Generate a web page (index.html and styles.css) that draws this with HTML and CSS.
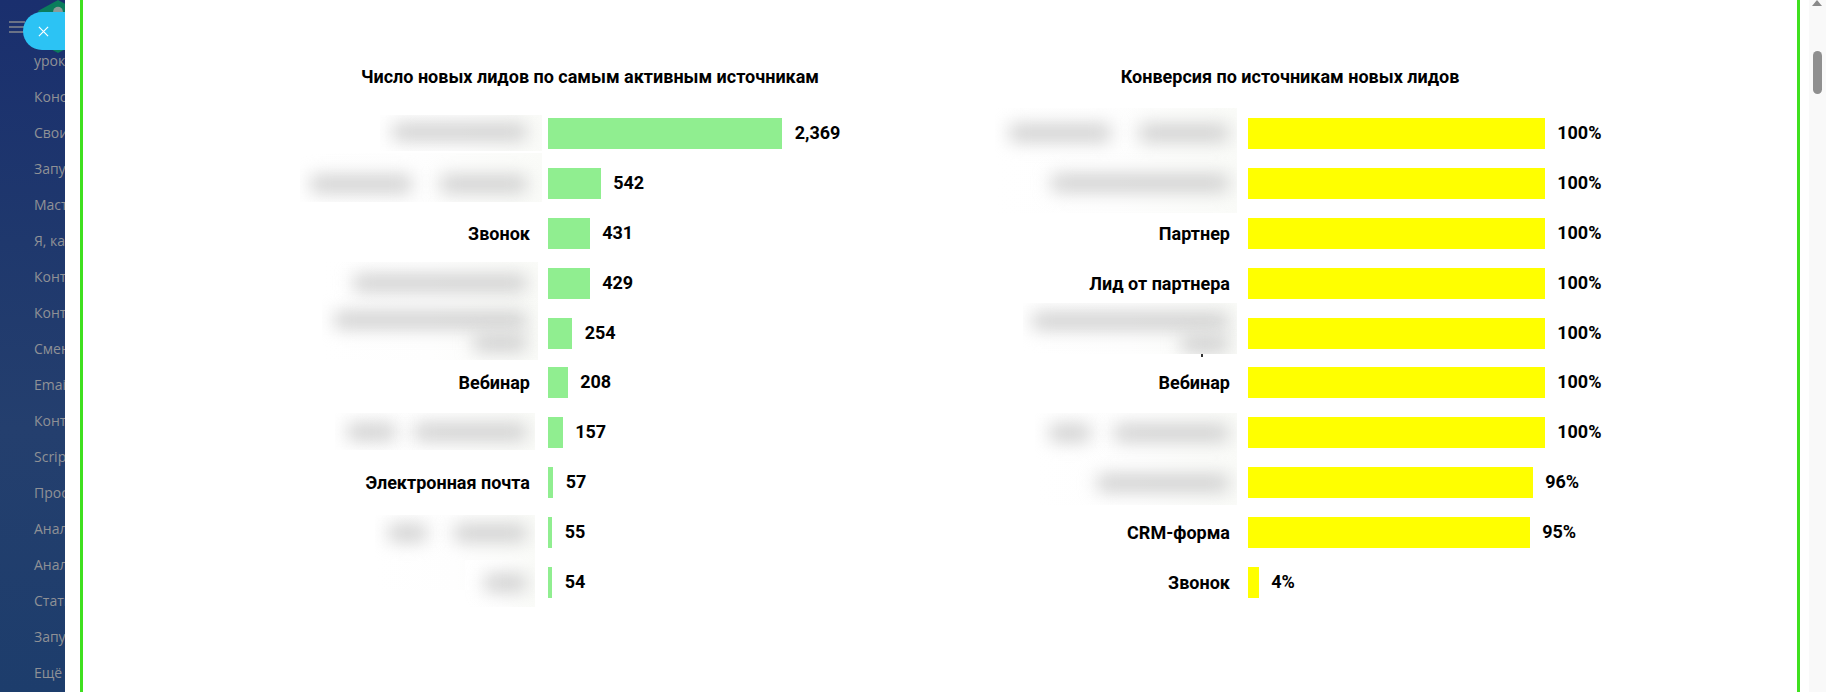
FILE: index.html
```html
<!DOCTYPE html>
<html lang="ru">
<head>
<meta charset="utf-8">
<title>Источники лидов</title>
<link rel="stylesheet" href="styles.css">
</head>
<body>
<div class="app">
  <aside class="sidebar">
    <svg class="logo" viewBox="0 0 40 54" aria-hidden="true"><path d="M20 0 40 11V43L20 54 0 43V11Z" fill="#0a7d5c"/><circle cx="20" cy="12" r="5" fill="#8b9a96"/></svg>
    <svg class="burger" viewBox="0 0 16 12" aria-hidden="true"><path d="M0 1h16M0 6h16M0 11h16" stroke="#85888f" stroke-width="1.4" fill="none"/></svg>
    <nav class="menu">
      <a>уроки</a><a>Консультации</a><a>Свои</a><a>Запуск</a><a>Мастер</a><a>Я, как</a><a>Контакты</a><a>Контент</a><a>Смена</a><a>Email</a><a>Контроль</a><a>Script</a><a>Просмотр</a><a>Анализ</a><a>Аналитика</a><a>Статистика</a><a>Запуски</a><a>Ещё</a>
    </nav>
    <button class="close" aria-label="Закрыть"><svg viewBox="0 0 12 12"><path d="M1 1 11 11M11 1 1 11" stroke="#fff" stroke-width="1.3" fill="none"/></svg></button>
  </aside>
  <main class="panel">
    <div class="frame">
      <div class="charts">
        <section class="chart chart-leads">
          <h2 class="title">Число новых лидов по самым активным источникам</h2>
          <div class="rows">
            <div class="row"><div class="label"><div class="redact l1"><div class="line"><i class="w133"></i></div></div></div><div class="bar" style="width:234.5px"></div><span class="value">2,369</span></div>
            <div class="row"><div class="label"><div class="redact l2"><div class="line"><i class="w100"></i><i class="w85 gap30"></i></div></div></div><div class="bar" style="width:53px"></div><span class="value">542</span></div>
            <div class="row"><div class="label">Звонок</div><div class="bar" style="width:42px"></div><span class="value">431</span></div>
            <div class="row"><div class="label"><div class="redact l4"><div class="line"><i class="w172"></i></div><div class="line next21"><i class="w191"></i></div><div class="line next7"><i class="w52"></i></div></div></div><div class="bar" style="width:42px"></div><span class="value">429</span></div>
            <div class="row"><div class="label"></div><div class="bar" style="width:24.5px"></div><span class="value">254</span></div>
            <div class="row"><div class="label">Вебинар</div><div class="bar" style="width:20px"></div><span class="value">208</span></div>
            <div class="row"><div class="label"><div class="redact l7"><div class="line"><i class="w47"></i><i class="w111 gap20"></i></div></div></div><div class="bar" style="width:15px"></div><span class="value">157</span></div>
            <div class="row"><div class="label">Электронная почта</div><div class="bar" style="width:5.5px"></div><span class="value">57</span></div>
            <div class="row"><div class="label"><div class="redact l9"><div class="line"><i class="w37"></i><i class="w71 gap29"></i></div></div></div><div class="bar" style="width:4.5px"></div><span class="value">55</span></div>
            <div class="row"><div class="label"><div class="redact l10"><div class="line"><i class="w41"></i></div></div></div><div class="bar" style="width:4.5px"></div><span class="value">54</span></div>
          </div>
        </section>
        <section class="chart chart-conv">
          <h2 class="title">Конверсия по источникам новых лидов</h2>
          <div class="rows">
            <div class="row"><div class="label"><div class="redact r1"><div class="line"><i class="w100"></i><i class="w88 gap30"></i></div><div class="line next34"><i class="w176"></i></div></div></div><div class="bar" style="width:297px"></div><span class="value">100%</span></div>
            <div class="row"><div class="label"></div><div class="bar" style="width:297px"></div><span class="value">100%</span></div>
            <div class="row"><div class="label">Партнер</div><div class="bar" style="width:297px"></div><span class="value">100%</span></div>
            <div class="row"><div class="label">Лид от партнера</div><div class="bar" style="width:297px"></div><span class="value">100%</span></div>
            <div class="row"><div class="label"><div class="redact r5"><div class="line"><i class="w195"></i></div><div class="line next7"><i class="w46"></i></div></div><span class="tick"></span></div><div class="bar" style="width:297px"></div><span class="value">100%</span></div>
            <div class="row"><div class="label">Вебинар</div><div class="bar" style="width:297px"></div><span class="value">100%</span></div>
            <div class="row"><div class="label"><div class="redact r7"><div class="line"><i class="w40"></i><i class="w113 gap25"></i></div><div class="line next34"><i class="w130"></i></div></div></div><div class="bar" style="width:297px"></div><span class="value">100%</span></div>
            <div class="row"><div class="label"></div><div class="bar" style="width:285px"></div><span class="value">96%</span></div>
            <div class="row"><div class="label">CRM-форма</div><div class="bar" style="width:282px"></div><span class="value">95%</span></div>
            <div class="row"><div class="label">Звонок</div><div class="bar" style="width:11px"></div><span class="value">4%</span></div>
          </div>
        </section>
      </div>
    </div>
  </main>
  <div class="scrollbar">
    <span class="arrow"></span>
    <span class="thumb"></span>
  </div>
</div>
</body>
</html>
```
FILE: styles.css
```css
* { box-sizing: border-box; }
html, body { margin: 0; height: 100%; overflow: hidden; background: #fff; }

.app { display: flex; width: 1826px; height: 692px; }

.sidebar {
  position: relative;
  flex: 0 0 65px;
  overflow: hidden;
  background: linear-gradient(to bottom, #1a2f6e 0%, #1f386d 35%, #243f6e 62%, #1d3d6c 100%);
}
.logo { position: absolute; left: 38px; top: 0; width: 40px; height: 53px; }
.burger { position: absolute; left: 9px; top: 21px; width: 16px; height: 12px; }
.close {
  position: absolute;
  left: 23px;
  top: 12px;
  width: 60px;
  height: 38px;
  padding: 0 0 0 15px;
  border: 0;
  border-radius: 19px;
  background: #2cc3f4;
  display: flex;
  align-items: center;
}
.close svg { width: 11px; height: 11px; }

.menu {
  display: flex;
  flex-direction: column;
  padding: 43px 0 0 34px;
  white-space: nowrap;
  font: 14px/36px "Open Sans", sans-serif;
  color: #8f9196;
}
.menu a { display: block; height: 36px; }

.panel { flex: 1 1 auto; min-width: 0; background: #fff; padding: 0 9px 0 15px; }
.frame {
  height: 100%;
  border-left: 3px solid #3fe01f;
  border-right: 3px solid #3fe01f;
}
.charts { display: flex; justify-content: center; padding-top: 66px; }
.chart { flex: 0 0 700px; }
.title {
  margin: 0 0 21.5px;
  text-align: center;
  font: 700 18px/21px Roboto, sans-serif;
  color: #000;
}
.row { display: flex; align-items: center; height: 49.9px; }
.label {
  position: relative;
  flex: 0 0 290px;
  margin-right: 17.5px;
  min-height: 21px;
  text-align: right;
  font: 700 18px/21px Roboto, sans-serif;
  color: #000;
}
.bar { height: 31px; flex: none; }
.chart-leads .bar { background: #90ee90; }
.chart-conv .bar { background: #ff0; }
.value { margin: -2px 0 0 12.7px; font: 700 18px/21px Roboto, sans-serif; color: #000; }

.redact {
  position: absolute;
  overflow: hidden;
  background: linear-gradient(to right, #fff 0%, #fefefe 50%, #fafbf8 100%);
}
.tick { position: absolute; left: 261px; top: 31px; width: 2px; height: 3px; background: #333; }
.line { display: flex; justify-content: flex-end; }
.line i { display: block; height: 16px; background: #cbcbcb; filter: blur(9px); }
.gap20 { margin-left: 20px; } .gap25 { margin-left: 25px; } .gap29 { margin-left: 29px; } .gap30 { margin-left: 30px; }
.next7 { margin-top: 7px; } .next21 { margin-top: 21px; } .next34 { margin-top: 34px; }
.w37 { width: 37px; } .w40 { width: 40px; } .w41 { width: 41px; } .w46 { width: 46px; } .w47 { width: 47px; } .w52 { width: 52px; }
.w71 { width: 71px; } .w85 { width: 85px; } .w88 { width: 88px; } .w100 { width: 100px; } .w111 { width: 111px; } .w113 { width: 113px; }
.w130 { width: 130px; } .w133 { width: 133px; } .w172 { width: 172px; } .w176 { width: 176px; } .w191 { width: 191px; } .w195 { width: 195px; }

.l1 { top: -7.5px; right: -12px; width: 162px; height: 36px; padding: 9px 16px 0 0; }
.l2 { top: -20px; right: -12px; width: 242px; height: 49px; padding: 23px 16px 0 0; }
.l4 { top: -11px; right: -8px; width: 216px; height: 98px; padding: 13px 12px 0 0; }
.l7 { top: -9px; right: -5px; width: 200px; height: 37px; padding: 11px 9px 0 0; }
.l9 { top: -7px; right: -4.5px; width: 160px; height: 75px; padding: 10px 8.5px 0 0; }
.l10 { top: -12px; right: -4.5px; width: 70px; height: 47px; padding: 15px 8.5px 0 0; }
.r1 { top: -15px; right: -7px; width: 242px; height: 105px; padding: 17px 9px 0 0; }
.r5 { top: -20px; right: -6.5px; width: 214px; height: 51px; padding: 10px 8.5px 0 0; }
.r7 { top: -9px; right: -7px; width: 202px; height: 92px; padding: 12px 9px 0 0; }

.scrollbar { position: relative; flex: 0 0 17px; background: #f9f9f9; display: flex; justify-content: center; padding-top: 51px; }
.arrow {
  position: absolute;
  top: 0;
  left: 3px;
  border-left: 5px solid transparent;
  border-right: 5px solid transparent;
  border-bottom: 6px solid #8a8a8a;
}
.thumb { width: 9px; height: 43px; border-radius: 5px; background: #8f8f8f; }
```
